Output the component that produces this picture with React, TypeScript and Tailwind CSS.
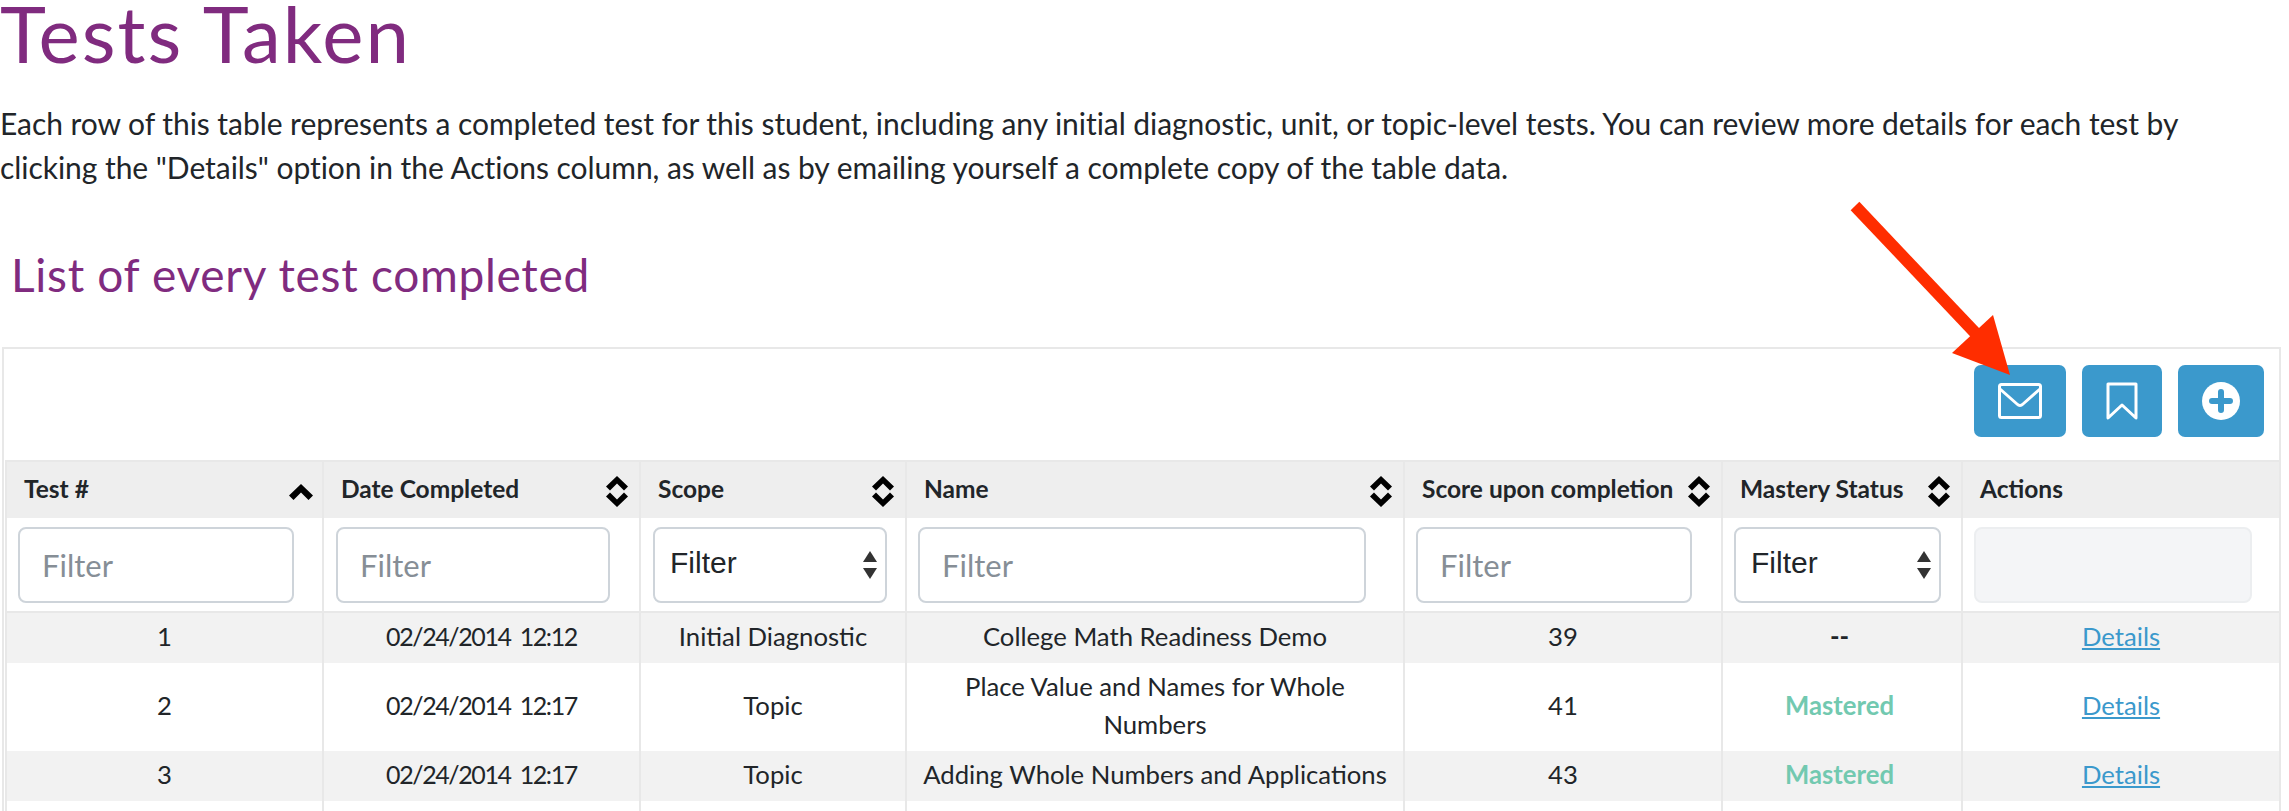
import React from 'react';

const columns = [
  { label: 'Test #', width: 'w-[317px]', sort: 'asc' },
  { label: 'Date Completed', width: 'w-[317px]', sort: 'both' },
  { label: 'Scope', width: 'w-[266px]', sort: 'both' },
  { label: 'Name', width: 'w-[498px]', sort: 'both' },
  { label: 'Score upon completion', width: 'w-[318px]', sort: 'both' },
  { label: 'Mastery Status', width: 'w-[240px]', sort: 'both' },
  { label: 'Actions', width: 'w-[318px]', sort: 'none' },
];

const rows = [
  { id: 1, date: '02/24/2014 12:12', scope: 'Initial Diagnostic', name: 'College Math Readiness Demo', score: 39, status: '--' },
  { id: 2, date: '02/24/2014 12:17', scope: 'Topic', name: 'Place Value and Names for Whole Numbers', score: 41, status: 'Mastered' },
  { id: 3, date: '02/24/2014 12:17', scope: 'Topic', name: 'Adding Whole Numbers and Applications', score: 43, status: 'Mastered' },
];

function SortIcon({ sort }: { sort: string }) {
  if (sort === 'none') return null;
  if (sort === 'asc') {
    return (
      <svg width="24" height="16" viewBox="0 0 24 16" className="absolute right-[9px] top-[22px]" fill="#000">
        <path d="M12 0 L24 11.5 L19.5 16 L12 8.5 L4.5 16 L0 11.5 Z" />
      </svg>
    );
  }
  return (
    <svg width="22" height="31" viewBox="0 0 22 31" className="absolute right-[11px] top-[14px]" fill="#000">
      <path d="M11 0 L22 10.5 L18 14.5 L11 7.5 L4 14.5 L0 10.5 Z" />
      <path d="M11 31 L22 20.5 L18 16.5 L11 23.5 L4 16.5 L0 20.5 Z" />
    </svg>
  );
}

function TextFilter({ className }: { className: string }) {
  return (
    <input
      placeholder="Filter"
      className={`h-[76px] rounded-[8px] border-2 border-[#ced4da] bg-white px-[22px] text-[31px] outline-none placeholder:text-[#868e96] ${className}`}
    />
  );
}

function SelectFilter({ className }: { className: string }) {
  return (
    <div className={`relative h-[76px] ${className}`}>
      <select className="h-full w-full appearance-none rounded-[8px] border-2 border-[#ced4da] bg-white pl-[15px] pb-1 text-[30px] text-[#212529] outline-none font-['Liberation_Sans',sans-serif]">
        <option>Filter</option>
      </select>
      <svg width="14" height="28" viewBox="0 0 14 28" className="absolute right-[10px] top-[24px]" fill="#333">
        <path d="M7 0 L14 11 L0 11 Z" />
        <path d="M0 17 L14 17 L7 28 Z" />
      </svg>
    </div>
  );
}

export default function App() {
  return (
    <div className="h-[811px] overflow-hidden bg-white font-['Lato',sans-serif] text-[#212529]">
      <h1 className="h-[86px] text-[78px] leading-[66px] tracking-[2px] text-[#802b7f]">Tests Taken</h1>
      <p className="mt-[15px] w-[2240px] text-[30px] leading-[44px] tracking-[-0.05px]">
        Each row of this table represents a completed test for this student, including any initial diagnostic, unit, or topic-level tests. You can review more details for each test by clicking the "Details" option in the Actions column, as well as by emailing yourself a complete copy of the table data.
      </p>
      <h2 className="mt-[56px] ml-[11px] h-[102px] text-[46px] leading-[60px] tracking-[0.7px] text-[#802b7f]">List of every test completed</h2>

      <div className="mx-[2px] w-[2279px] border-2 border-[#e8e8e8] pl-[1px]">
        <div className="flex h-[111px] items-start justify-end gap-4 pt-[16px] pr-[15px]">
          <button className="flex h-[72px] w-[92px] items-center justify-center rounded-[7px] bg-[#3b99cc]">
            <svg width="44" height="36" viewBox="0 0 44 36" fill="none" stroke="#fff" strokeWidth="3" strokeLinejoin="round">
              <rect x="1.5" y="1.5" width="41" height="33" rx="2" />
              <path d="M2 6 L19 21 Q22 24 25 21 L42 6" />
            </svg>
          </button>
          <button className="flex h-[72px] w-[80px] items-center justify-center rounded-[7px] bg-[#3b99cc]">
            <svg width="32" height="38" viewBox="0 0 32 38" fill="none" stroke="#fff" strokeWidth="3" strokeLinejoin="round">
              <path d="M2 2 H30 V36 L16 23 L2 36 Z" />
            </svg>
          </button>
          <button className="flex h-[72px] w-[86px] items-center justify-center rounded-[7px] bg-[#3b99cc]">
            <svg width="38" height="38" viewBox="0 0 38 38">
              <circle cx="19" cy="19" r="19" fill="#fff" />
              <path d="M19 10 V28 M10 19 H28" stroke="#3b99cc" strokeWidth="6" strokeLinecap="round" />
            </svg>
          </button>
        </div>

        <table className="w-[2274px] table-fixed border-collapse text-[25.7px] leading-[38px]">
          <colgroup>
            {columns.map((c) => (
              <col key={c.label} className={c.width} />
            ))}
          </colgroup>
          <thead>
            <tr className="h-[57px] border-t-2 border-[#e8e8e8] bg-[#eeeeee]">
              {columns.map((c) => (
                <th key={c.label} className="relative border-x-2 border-[#e8e8e8] pb-[2px] pl-[17px] text-left text-[24.5px] font-bold">
                  {c.label}
                  <SortIcon sort={c.sort} />
                </th>
              ))}
            </tr>
            <tr className="h-[94px] border-b-2 border-[#e8e8e8]">
              <td className="border-x-2 border-[#e8e8e8] pl-[11px]"><TextFilter className="w-[276px]" /></td>
              <td className="border-x-2 border-[#e8e8e8] pl-[12px]"><TextFilter className="w-[274px]" /></td>
              <td className="border-x-2 border-[#e8e8e8] pl-[12px]"><SelectFilter className="w-[234px]" /></td>
              <td className="border-x-2 border-[#e8e8e8] pl-[11px]"><TextFilter className="w-[448px]" /></td>
              <td className="border-x-2 border-[#e8e8e8] pl-[11px]"><TextFilter className="w-[276px]" /></td>
              <td className="border-x-2 border-[#e8e8e8] pl-[11px]"><SelectFilter className="w-[207px]" /></td>
              <td className="border-x-2 border-[#e8e8e8] pl-[11px]">
                <input disabled className="h-[76px] w-[278px] rounded-[8px] border-2 border-[#eceef0] bg-[#f4f5f7]" />
              </td>
            </tr>
          </thead>
          <tbody>
            {rows.map((r) => (
              <tr key={r.id} className="text-center odd:bg-[#f2f2f2]">
                <td className="border-x-2 border-[#e8e8e8] px-2 pt-[4px] pb-[8px]">{r.id}</td>
                <td className="border-x-2 border-[#e8e8e8] px-2 pt-[4px] pb-[8px] text-[25px] tracking-[-1.4px] [word-spacing:4px]">{r.date}</td>
                <td className="border-x-2 border-[#e8e8e8] px-2 pt-[4px] pb-[8px]">{r.scope}</td>
                <td className="border-x-2 border-[#e8e8e8] px-2 pt-[4px] pb-[8px]">{r.name}</td>
                <td className="border-x-2 border-[#e8e8e8] px-2 pt-[4px] pb-[8px]">{r.score}</td>
                <td className={`border-x-2 border-[#e8e8e8] pl-2 pr-[13px] pt-[4px] pb-[8px] font-bold ${r.status === 'Mastered' ? 'text-[#72c9b0]' : ''}`}>{r.status}</td>
                <td className="border-x-2 border-[#e8e8e8] px-2 pt-[4px] pb-[8px]">
                  <a href="#" className="text-[#3b99cc] underline">Details</a>
                </td>
              </tr>
            ))}
            <tr className="h-[50px]">
              {columns.map((c) => (
                <td key={c.label} className="border-x-2 border-[#e8e8e8]" />
              ))}
            </tr>
          </tbody>
        </table>
      </div>

      {/* red arrow pasted on top of the screenshot */}
      <svg width="2289" height="811" className="pointer-events-none absolute left-0 top-0">
        <path d="M1855 206 L1982 340" stroke="#ff2d00" strokeWidth="12" fill="none" />
        <path d="M2010 375 L1993 315 L1952 353 Z" fill="#ff2d00" />
      </svg>
    </div>
  );
}
